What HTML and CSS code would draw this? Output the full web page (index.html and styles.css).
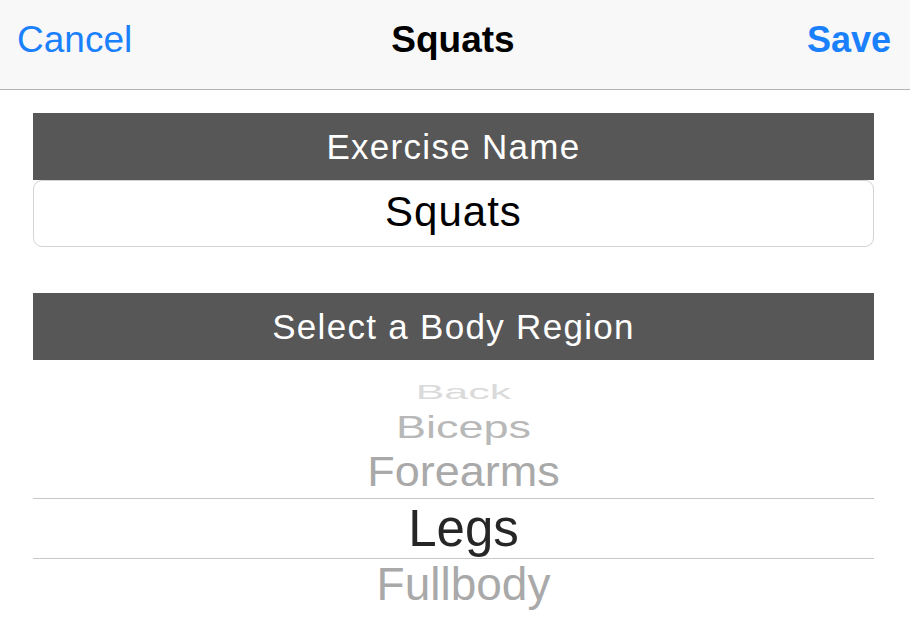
FILE: index.html
```html
<!DOCTYPE html>
<html>
<head>
<meta charset="utf-8">
<link rel="stylesheet" href="styles.css">
</head>
<body>
<header class="nav">
  <span class="nav-btn nav-cancel">Cancel</span>
  <span class="nav-title">Squats</span>
  <span class="nav-btn nav-save">Save</span>
</header>
<main class="content">
  <div class="section-head">Exercise Name</div>
  <div class="name-field">Squats</div>
  <div class="section-head region-head">Select a Body Region</div>
  <div class="picker">
    <div class="row row-back"><span>Back</span></div>
    <div class="row row-biceps"><span>Biceps</span></div>
    <div class="row row-forearms"><span>Forearms</span></div>
    <div class="row row-selected"><span>Legs</span></div>
    <div class="row row-fullbody"><span>Fullbody</span></div>
  </div>
</main>
</body>
</html>
```
FILE: styles.css
```css
* { box-sizing: border-box; }
body {
  margin: 0;
  background: #ffffff;
  font-family: "Liberation Sans", Arial, sans-serif;
  width: 910px;
  height: 632px;
  overflow: hidden;
}
.nav {
  height: 90px;
  background: #f8f8f8;
  border-bottom: 1px solid #b3b3b3;
  display: grid;
  grid-template-columns: 1fr auto 1fr;
  align-items: center;
  padding: 0 19px 10px 17px;
}
.nav-btn {
  color: #1a80fb;
  font-size: 37px;
}
.nav-cancel { justify-self: start; }
.nav-save {
  justify-self: end;
  font-weight: bold;
  font-size: 36px;
}
.nav-title {
  font-weight: bold;
  font-size: 37px;
  color: #000;
  margin-right: 2px;
}
.content {
  padding: 23px 36px 0 33px;
}
.section-head {
  height: 67px;
  background: #575757;
  color: #ffffff;
  font-size: 35px;
  letter-spacing: 1.3px;
  line-height: 67px;
  text-align: center;
}
.name-field {
  height: 67px;
  border: 1px solid #d3d3d3;
  border-radius: 9px;
  font-size: 42px;
  letter-spacing: 1px;
  color: #000;
  display: flex;
  align-items: center;
  justify-content: center;
  padding-bottom: 4px;
}
.region-head {
  margin-top: 46px;
}
.picker {
  height: 272px;
  padding-top: 14px;
  padding-left: 20px;
  overflow: hidden;
}
.row {
  display: flex;
  align-items: center;
  justify-content: center;
}
.row span { display: block; }
.row-back {
  height: 36px;
  font-size: 43px;
  color: #dadada;
}
.row-back span { transform: scaleY(0.45); }
.row-biceps {
  height: 36px;
  font-size: 45px;
  color: #b8b8b8;
}
.row-biceps span { transform: scaleY(0.7); }
.row-forearms {
  height: 52px;
  font-size: 45px;
  color: #a9a9a9;
}
.row-forearms span { transform: scaleY(0.93); }
.row-selected {
  height: 61px;
  border-top: 1px solid #c8c8c8;
  border-bottom: 1px solid #c8c8c8;
  margin-left: -20px;
  padding-left: 20px;
  font-size: 51px;
  color: #262626;
}
.row-fullbody {
  height: 49px;
  font-size: 46px;
  color: #a9a9a9;
}
```
